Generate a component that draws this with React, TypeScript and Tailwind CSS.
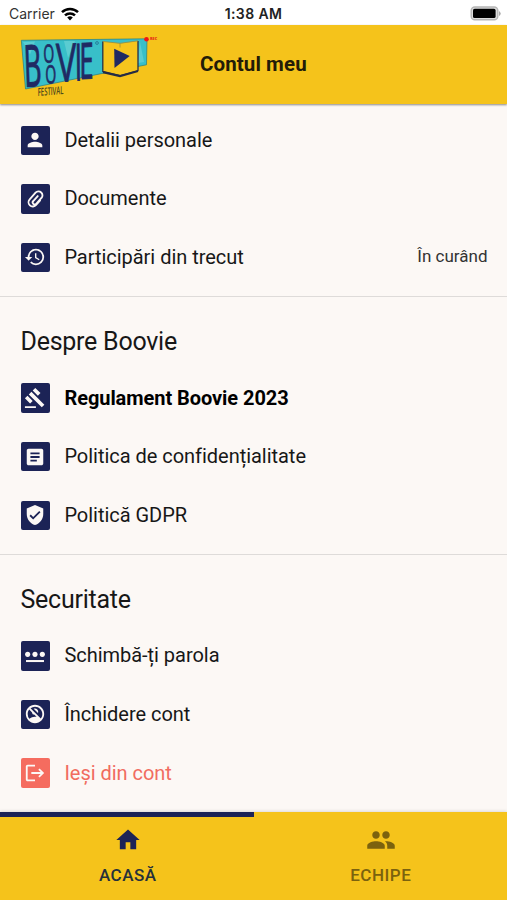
import React from "react";
import type { IconType } from "react-icons";
import {
    MdArticle,
    MdGavel,
    MdHistory,
    MdHome,
    MdLogout,
    MdNoAccounts,
    MdPeople,
    MdPerson,
    MdVerifiedUser,
} from "react-icons/md";

interface MenuItem {
    label: string;
    icon: IconType | typeof PaperclipIcon;
    note?: string;
    bold?: boolean;
    danger?: boolean;
}

function PaperclipIcon({ className }: { className?: string }) {
    return (
        <svg className={className} viewBox="0 0 24 24" fill="none" stroke="currentColor" strokeWidth="2" strokeLinecap="round">
            <path d="M17.6 13.4l-4.4 5.1a4.6 4.6 0 0 1-6.8.4 4.7 4.7 0 0 1-.2-6.6l6.4-7.2a4.3 4.3 0 0 1 6.2-.2 4.2 4.2 0 0 1 .2 6l-5.7 6.3a2.2 2.2 0 0 1-3.2.1 2.2 2.2 0 0 1 0-3.1l4.9-5.4" />
        </svg>
    );
}

function PasswordIcon({ className }: { className?: string }) {
    return (
        <svg className={className} viewBox="0 0 24 24" fill="currentColor">
            <rect x="2.2" y="16.4" width="19.6" height="2.2" />
            <circle cx="4" cy="10.2" r="2.8" />
            <circle cx="12" cy="10.2" r="2.8" />
            <circle cx="20" cy="10.2" r="2.8" />
        </svg>
    );
}

const account: MenuItem[] = [
    { label: "Detalii personale", icon: MdPerson },
    { label: "Documente", icon: PaperclipIcon },
    { label: "Participări din trecut", icon: MdHistory, note: "În curând" },
];

const about: MenuItem[] = [
    { label: "Regulament Boovie 2023", icon: MdGavel, bold: true },
    { label: "Politica de confidențialitate", icon: MdArticle },
    { label: "Politică GDPR", icon: MdVerifiedUser },
];

const security: MenuItem[] = [
    { label: "Schimbă-ți parola", icon: PasswordIcon },
    { label: "Închidere cont", icon: MdNoAccounts },
    { label: "Ieși din cont", icon: MdLogout, danger: true },
];

function StatusBar() {
    return (
        <div className="relative flex h-[25px] shrink-0 items-center justify-between bg-white pl-[9px] pr-[6px] pt-[2px] font-['Inter',sans-serif] text-black">
            <div className="flex items-center gap-[6px]">
                <span className="text-[14px] leading-none text-[#333]">Carrier</span>
                <svg className="h-[14px] w-[18px]" viewBox="0 0 18 14" fill="none" stroke="currentColor" strokeWidth="2.5">
                    <path d="M1 5.2a11.4 11.4 0 0 1 16 0" />
                    <path d="M4 8.4a7.2 7.2 0 0 1 10 0" />
                    <path d="M6.2 10.5a4 4 0 0 1 5.6 0L9 13.4z" fill="currentColor" stroke="none" />
                </svg>
            </div>
            <span className="absolute left-1/2 -translate-x-1/2 whitespace-nowrap text-[14px] font-semibold leading-none tracking-[0.4px] text-[#222]">1:38 AM</span>
            <svg className="h-[15px] w-[31px]" viewBox="0 0 31 15">
                <rect x="1.2" y="1" width="26.6" height="12.8" rx="3.6" fill="#ddd" stroke="#b5b5b5" strokeWidth="1.4" />
                <rect x="3" y="2.8" width="22.6" height="9.2" rx="1.6" fill="#000" />
                <path d="M29 5v5q1.7-1 1.7-2.5T29 5z" fill="#aaa" />
            </svg>
        </div>
    );
}

function Logo() {
    return (
        <svg className="mt-[7px] h-[66px] w-[140px] overflow-visible" viewBox="20 35 140 66" fontFamily="'Open Sans', sans-serif">
            <path d="M21.3 40.3L147 38.8l-.5 26-43 8.4L25.5 89z" fill="#38bfc9" stroke="#267d83" strokeWidth=".7" />
            <path d="M23 42l12-.5-5 13zM64 41h11l-7 17zM140 42l4 20-6 1z" fill="#6dd2d5" opacity=".65" />
            <g fill="#202a63" stroke="#202a63" fontWeight="400">
                <text transform="matrix(.47 -.03 .035 1 24.6 87)" fontSize="58" strokeWidth="1">B</text>
                <text transform="matrix(.56 -.02 .02 1 43.6 62.8)" fontSize="25" strokeWidth=".8">O</text>
                <text transform="matrix(.56 -.02 .02 1 45.6 83.6)" fontSize="25" strokeWidth=".8">O</text>
                <text transform="matrix(.64 -.02 .02 1 56.5 81.8)" fontSize="53" strokeWidth=".8">V</text>
                <text transform="matrix(.5 -.02 .01 1 75 80.4)" fontSize="51" strokeWidth="1.2">I</text>
                <text transform="matrix(.5 -.02 0 1 79.4 79)" fontSize="50" strokeWidth="1.2">E</text>
            </g>
            <circle cx="97" cy="43" r="1.4" fill="none" stroke="#246e91" strokeWidth=".8" />
            <text transform="matrix(.54 -.04 0 1 37.7 96)" fontSize="11" fontWeight="600" fill="#4c481c">FESTIVAL</text>
            <path d="M102.8 41.5l17.4 2 17.7-2.6v30L120 75.5l-17.2-4z" fill="#f6c51d" />
            <path d="M102.8 41.5v30l17.2 4.2 18-5.2V41" fill="none" stroke="#2a3148" strokeWidth="1.3" />
            <path d="M103 72.3l17 3.8 18-5" fill="none" stroke="#252b44" strokeWidth="2" />
            <path d="M103 41.5l17 1.8 18-2.5M120 43.5v4" fill="none" stroke="#a18c35" strokeWidth=".8" />
            <path d="M114.2 48.7l15.5 7.2-15.2 12z" fill="#202a63" />
            <circle cx="146.5" cy="39.2" r="2.3" fill="#f11414" />
            <text x="150" y="40.4" fontSize="3.8" fontWeight="800" fill="#e52b16">REC</text>
        </svg>
    );
}

function MenuRow({ item }: { item: MenuItem }) {
    const Icon = item.icon;
    return (
        <li className={`flex h-[58.6px] items-center ${item.danger ? "text-[#f16c60]" : "text-[#171717]"}`}>
            <span className={`mt-px flex size-[29.4px] items-center justify-center rounded-[2px] text-[#fcf8f5] ${item.danger ? "bg-[#f56c5f]" : "bg-[#1c2356]"}`}>
                <Icon className="size-[22px]" />
            </span>
            <span className={`ml-[14.5px] text-[20px] leading-6 ${item.bold ? "font-bold tracking-[-0.06px] text-black" : "tracking-[-0.03px]"}`}>
                {item.label}
            </span>
            {item.note && <span className="ml-auto text-[17px] text-[#333]">{item.note}</span>}
        </li>
    );
}

function Section({ title, items }: { title?: string; items: MenuItem[] }) {
    return (
        <section className="pl-[20.5px] pr-[19.5px]">
            {title && <h2 className="pt-[30px] text-[25px] leading-[30px] tracking-[-0.25px] text-[#171717]">{title}</h2>}
            <ul className={title ? "pt-[11px]" : "pt-[7px]"}>
                {items.map((item) => (
                    <MenuRow key={item.label} item={item} />
                ))}
            </ul>
        </section>
    );
}

export default function App() {
    return (
        <div className="flex h-[900px] w-[507px] flex-col overflow-hidden bg-[#fcf8f5] font-['Roboto',sans-serif]">
            <StatusBar />
            <header className="z-10 flex h-[78.5px] shrink-0 items-center bg-[#f5c31b] pl-5 shadow-[0_1px_2px_rgba(0,0,0,0.45)]">
                <Logo />
                <h1 className="ml-10 text-[20.5px] font-bold tracking-[0.1px] text-[#231c08]">Contul meu</h1>
            </header>

            <main className="min-h-0 flex-1">
                <Section items={account} />
                <hr className="mt-[10px] border-[#dedbd9]" />
                <Section title="Despre Boovie" items={about} />
                <hr className="mt-[10px] border-[#dedbd9]" />
                <Section title="Securitate" items={security} />
            </main>

            <nav className="grid h-[88px] shrink-0 grid-cols-2 bg-[#f5c31b] text-[17px] font-medium shadow-[0_-1px_3px_rgba(0,0,0,0.12)]">
                <a className="flex flex-col items-center border-t-[5px] border-[#1c2356] pt-[9px] pl-[2px] text-[#1c2356]">
                    <MdHome className="size-[28px]" />
                    <span className="mt-[9px] leading-6 tracking-[0.5px] text-[#25303b]">ACASĂ</span>
                </a>
                <a className="flex flex-col items-center pt-[13px] pl-px text-[#7b620e]">
                    <MdPeople className="size-[30px]" />
                    <span className="mt-[8px] leading-6 tracking-[0.5px]">ECHIPE</span>
                </a>
            </nav>
        </div>
    );
}
